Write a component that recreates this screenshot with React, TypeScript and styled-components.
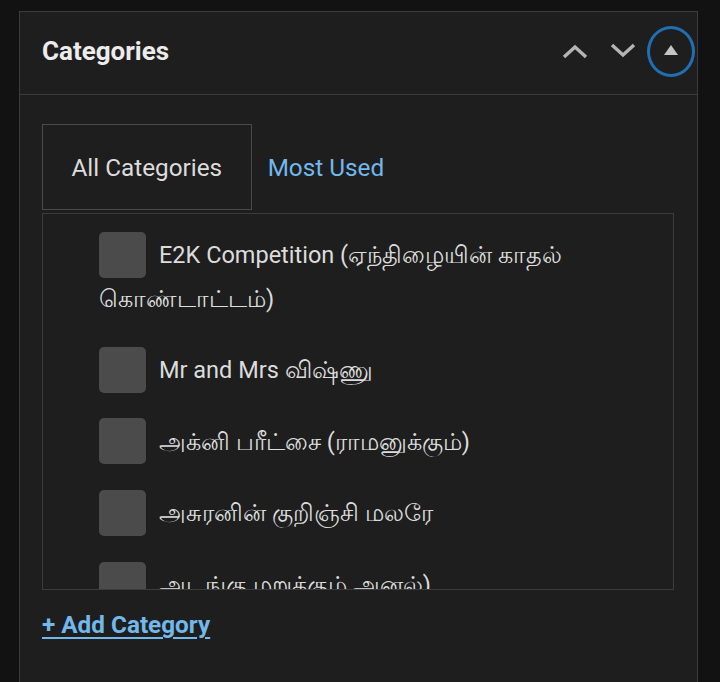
import styled, { createGlobalStyle } from 'styled-components'

const GlobalStyle = createGlobalStyle`
    html, body {
        margin: 0;
        padding: 0;
        background: #121212;
        font-family: Roboto, "Noto Sans", "Liberation Sans", sans-serif;
    }
`

interface TabProps {
    $active?: boolean
}

const categories = [
    'E2K Competition (ஏந்திழையின் காதல் கொண்டாட்டம்)',
    'Mr and Mrs விஷ்ணு',
    'அக்னி பரீட்சை (ராமனுக்கும்)',
    'அசுரனின் குறிஞ்சி மலரே',
    'அடங்கு மறுக்கும் அனல்)',
]

const App = () => {
    return (
        <>
            <GlobalStyle />
            <Page>
                <Panel>
                    <Header>
                        <Title>Categories</Title>
                        <Controls>
                            <IconButton aria-label="Move up">
                                <svg width="28" height="16" viewBox="0 0 28 16">
                                    <path d="M3 14 L14 4 L25 14" fill="none" stroke="#b4b4b4" strokeWidth="3.4" />
                                </svg>
                            </IconButton>
                            <IconButton aria-label="Move down">
                                <svg width="28" height="16" viewBox="0 0 28 16">
                                    <path d="M3 2 L14 12 L25 2" fill="none" stroke="#b4b4b4" strokeWidth="3.4" />
                                </svg>
                            </IconButton>
                            <ToggleButton aria-label="Toggle panel">
                                <svg width="16" height="12" viewBox="0 0 16 12">
                                    <path d="M1 11 L8 1 L15 11 Z" fill="#c4c4c4" />
                                </svg>
                            </ToggleButton>
                        </Controls>
                    </Header>
                    <Body>
                        <Tabs>
                            <Tab $active>All Categories</Tab>
                            <Tab>Most Used</Tab>
                        </Tabs>
                        <ListBox>
                            {categories.map(name => (
                                <Item key={name}>
                                    <CheckBox />
                                    {name}
                                </Item>
                            ))}
                        </ListBox>
                        <AddLink>+ Add Category</AddLink>
                    </Body>
                </Panel>
            </Page>
        </>
    )
}

export default App

const Page = styled.div`
    padding: 11px 0 0 19px;
    height: 682px;
    box-sizing: border-box;
    overflow: hidden;
`

const Panel = styled.div`
    width: 679px;
    min-height: 700px;
    box-sizing: border-box;
    background: #1e1e1e;
    border: 1px solid #3c3c3c;
    border-bottom: none;
`

const Header = styled.div`
    height: 82px;
    display: flex;
    align-items: center;
    justify-content: space-between;
    padding-left: 22px;
    border-bottom: 1px solid #3c3c3c;
`

const Title = styled.h2`
    margin: 0 0 4px;
    font-size: 26px;
    font-weight: 700;
    color: #ececec;
`

const Controls = styled.div`
    display: flex;
    align-items: center;
    gap: 20px;
    margin: 0 2px 4px 0;
`

const IconButton = styled.span`
    display: flex;
    align-items: center;
    justify-content: center;
    width: 28px;
    height: 28px;
`

const ToggleButton = styled.span`
    display: flex;
    align-items: center;
    justify-content: center;
    width: 42px;
    height: 42px;
    border: 3px solid #1f6fb3;
    border-radius: 50%;
    margin-left: -10px;
    padding-bottom: 3px;
    box-sizing: content-box;
`

const Body = styled.div`
    padding: 29px 0 0 22px;
`

const Tabs = styled.div`
    display: flex;
    align-items: stretch;
    margin-bottom: 3px;
`

const Tab = styled.div<TabProps>`
    display: flex;
    align-items: center;
    height: 84px;
    padding: 0 ${props => props.$active ? '28.5px' : '15px'};
    border: 1px solid ${props => props.$active ? '#4a4a4a' : 'transparent'};
    font-size: 24.3px;
    color: ${props => props.$active ? '#dcdcdc' : '#72b8ea'};
`

const ListBox = styled.div`
    width: 632px;
    height: 377px;
    box-sizing: border-box;
    border: 1px solid #3c3c3c;
    overflow: hidden;
    padding: 20px 20px 0 56px;
`

const Item = styled.div`
    font-size: 23.5px;
    line-height: 43px;
    color: #dcdcdc;
    margin-bottom: 28px;
`

const CheckBox = styled.span`
    display: inline-block;
    width: 47px;
    height: 46px;
    border-radius: 5px;
    background: #4b4b4b;
    vertical-align: middle;
    margin: -4px 13px 0 0;
`

const AddLink = styled.a`
    display: inline-block;
    margin-top: 20px;
    font-size: 24.3px;
    font-weight: 700;
    color: #72b8ea;
    text-decoration: underline;
    text-underline-offset: 4px;
    text-decoration-thickness: 2px;
`
